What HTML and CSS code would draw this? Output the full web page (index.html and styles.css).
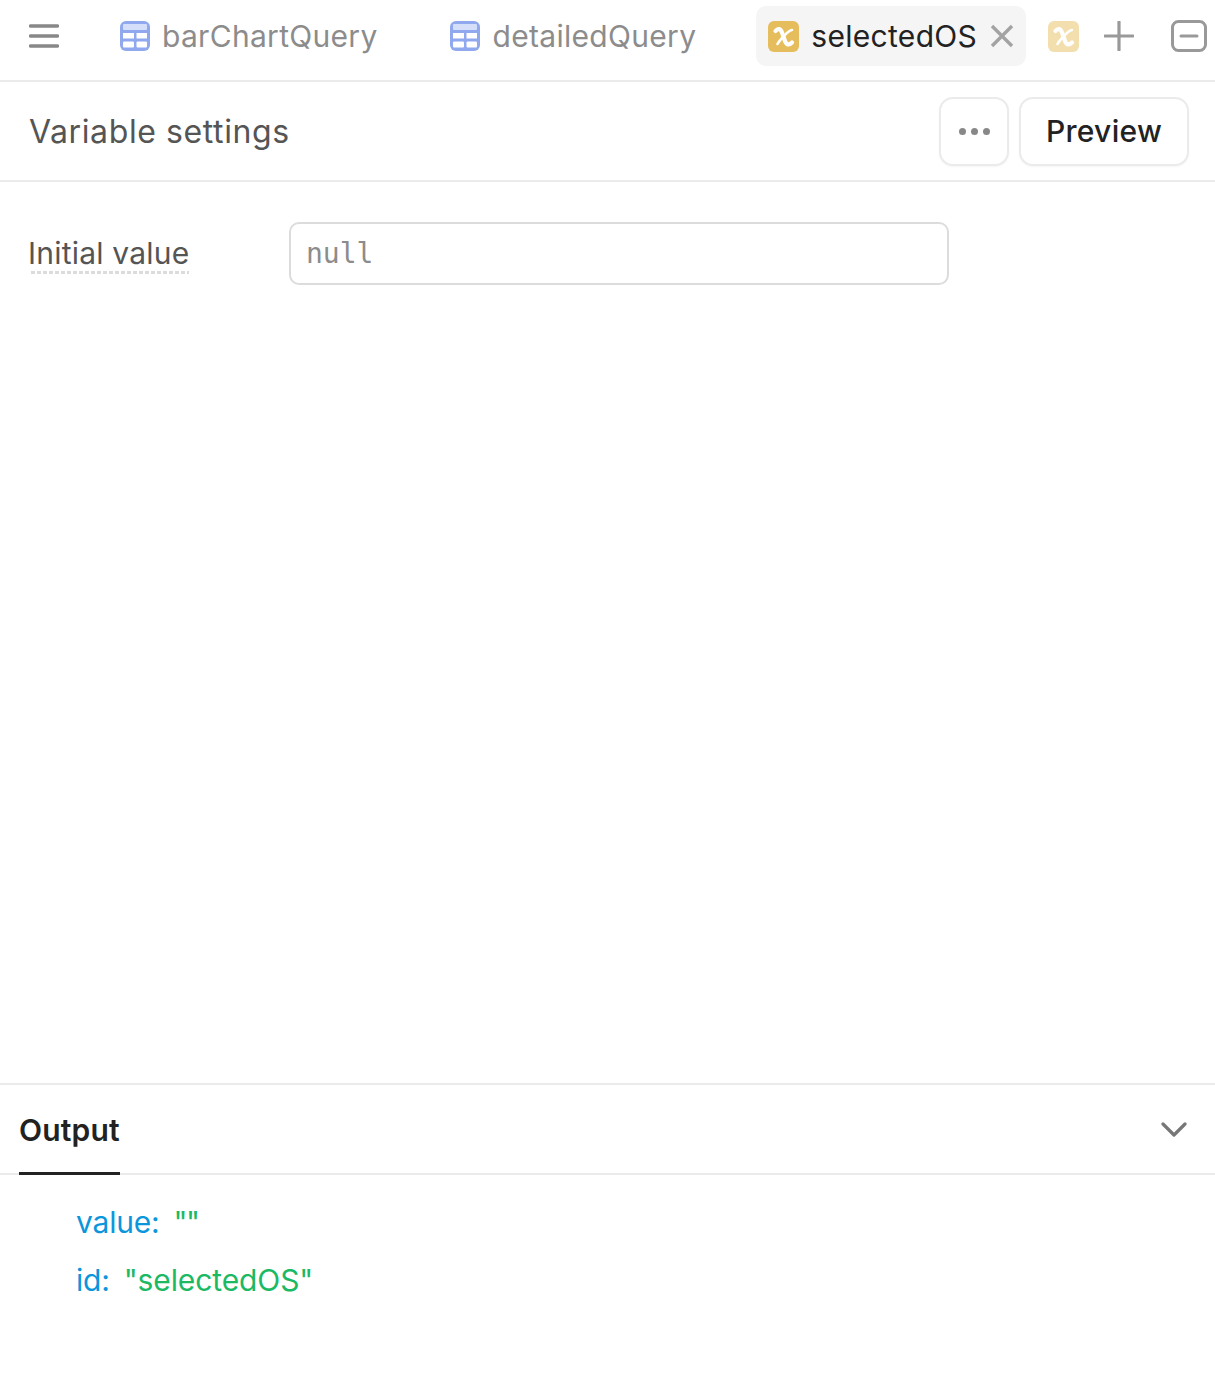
FILE: index.html
```html
<!DOCTYPE html>
<html lang="en">
<head>
    <meta charset="UTF-8">
    <title>Variable settings</title>
    <link rel="stylesheet" href="styles.css">
</head>
<body>
    <div class="tabs">
        <button class="icon-btn menu-btn">
            <svg width="30" height="24" viewBox="0 0 30 24"><path d="M1.5 2h27M1.5 12h27M1.5 22h27" stroke="#888" stroke-width="3.4" stroke-linecap="round" fill="none"/></svg>
        </button>
        <div class="tab tab-first">
            <svg class="tab-icon" width="30" height="30" viewBox="0 0 30 30">
                <rect width="30" height="30" rx="6" fill="#8fa8ee"/>
                <rect x="3" y="3" width="24" height="6" rx="1" fill="#d5dffa"/>
                <rect x="3" y="12" width="11" height="5.5" fill="#fff"/>
                <rect x="16.500" y="12" width="10.500" height="5.500" fill="#fff"/>
                <rect x="3" y="20.500" width="11" height="6" rx="1" fill="#fff"/>
                <rect x="16.500" y="20.500" width="10.500" height="6" rx="1" fill="#fff"/>
            </svg>
            <span>barChartQuery</span>
        </div>
        <div class="tab tab-second">
            <svg class="tab-icon" width="30" height="30" viewBox="0 0 30 30">
                <rect width="30" height="30" rx="6" fill="#8fa8ee"/>
                <rect x="3" y="3" width="24" height="6" rx="1" fill="#d5dffa"/>
                <rect x="3" y="12" width="11" height="5.5" fill="#fff"/>
                <rect x="16.500" y="12" width="10.500" height="5.500" fill="#fff"/>
                <rect x="3" y="20.500" width="11" height="6" rx="1" fill="#fff"/>
                <rect x="16.500" y="20.500" width="10.500" height="6" rx="1" fill="#fff"/>
            </svg>
            <span>detailedQuery</span>
        </div>
        <div class="tab tab-active">
            <svg class="var-icon" width="31" height="31" viewBox="0 0 31 31">
                <rect width="31" height="31" rx="6" fill="#e5bd5c"/>
                <path d="M7.500 10C10 7 12.500 7.500 14 11.500L17 20C18.500 24 21 24.500 24 21.500" stroke="#fff" stroke-width="4.200" stroke-linecap="round" fill="none"/>
                <path d="M24 9C20 9.500 11 20 9.500 23" stroke="#fff" stroke-width="2.600" stroke-linecap="round" fill="none"/>
            </svg>
            <span class="tab-name">selectedOS</span>
            <svg class="close-icon" width="24" height="24" viewBox="0 0 24 24"><path d="M2 2l20 20M22 2L2 22" stroke="#a3a3a3" stroke-width="3.4" fill="none"/></svg>
        </div>
        <svg class="var-icon var-faded" width="31" height="31" viewBox="0 0 31 31">
            <rect width="31" height="31" rx="6" fill="#f3dfae"/>
            <path d="M7.500 10C10 7 12.500 7.500 14 11.500L17 20C18.500 24 21 24.500 24 21.500" stroke="#fff" stroke-width="4.200" stroke-linecap="round" fill="none"/>
            <path d="M24 9C20 9.500 11 20 9.500 23" stroke="#fff" stroke-width="2.600" stroke-linecap="round" fill="none"/>
        </svg>
        <button class="icon-btn plus-btn">
            <svg width="30" height="30" viewBox="0 0 30 30"><path d="M15 1v28M1 15h28" stroke="#999" stroke-width="3.2" stroke-linecap="round" fill="none"/></svg>
        </button>
        <button class="icon-btn collapse-btn">
            <svg width="36" height="32" viewBox="0 0 36 32"><rect x="1.500" y="1.500" width="33" height="29" rx="6" stroke="#999" stroke-width="3" fill="none"/><path d="M10 16h16" stroke="#999" stroke-width="3" stroke-linecap="round"/></svg>
        </button>
    </div>

    <div class="title-bar">
        <h2>Variable settings</h2>
        <div class="title-actions">
            <button class="btn btn-more"><i></i><i></i><i></i></button>
            <button class="btn btn-preview">Preview</button>
        </div>
    </div>

    <div class="settings">
        <label class="field-label">Initial value</label>
        <div class="field-input">null</div>
    </div>

    <div class="output">
        <div class="output-head">
            <span class="output-tab">Output</span>
            <svg width="26" height="16" viewBox="0 0 26 16"><path d="M2 2l11 11L24 2" stroke="#777" stroke-width="3.2" stroke-linecap="round" stroke-linejoin="round" fill="none"/></svg>
        </div>
        <div class="output-body">
            <div class="row"><span class="key">value:</span><span class="val val-empty">""</span></div>
            <div class="row"><span class="key">id:</span><span class="val">"selectedOS"</span></div>
        </div>
    </div>
</body>
</html>
```

FILE: styles.css
```css
* {
    box-sizing: border-box;
}
body {
    margin: 0;
    height: 1394px;
    display: flex;
    flex-direction: column;
    font-family: Inter, "Liberation Sans", sans-serif;
    color: #222;
    background-color: #fff;
    overflow: hidden;
}
button {
    font-family: inherit;
    background: none;
    border: none;
    padding: 0;
}
.icon-btn {
    display: flex;
    flex-shrink: 0;
}

/* tabs */
.tabs {
    height: 82px;
    flex-shrink: 0;
    display: flex;
    align-items: center;
    padding: 0 0 8px 29px;
    border-bottom: 2px solid #ebebeb;
    font-size: 30px;
    letter-spacing: 0.3px;
    white-space: nowrap;
}
.menu-btn {
    margin-right: 61px;
}
.tab {
    display: flex;
    align-items: center;
    color: #8c8c8c;
}
.tab-icon {
    margin-right: 12px;
    flex-shrink: 0;
}
.tab-first {
    margin-right: 72px;
}
.tab-second {
    margin-right: 60px;
}
.tab-second .tab-icon {
    margin-right: 13px;
}
.tab-active {
    height: 60px;
    width: 270px;
    padding: 0 12px;
    background-color: #f5f5f5;
    border-radius: 10px;
    color: #222;
}
.tab-name {
    margin-left: 12px;
    margin-right: 13px;
}
.close-icon {
    flex-shrink: 0;
}
.var-icon {
    flex-shrink: 0;
}
.var-faded {
    margin-left: 22px;
    margin-right: 25px;
}
.plus-btn {
    margin-right: 37px;
}

/* title */
.title-bar {
    height: 100px;
    flex-shrink: 0;
    display: flex;
    align-items: center;
    justify-content: space-between;
    padding: 0 26px 0 29px;
    border-bottom: 2px solid #ebebeb;
}
.title-bar h2 {
    margin: 0;
    font-size: 32px;
    font-weight: 400;
    letter-spacing: 0.6px;
    color: #555;
}
.title-actions {
    display: flex;
    gap: 10px;
    margin-top: 1px;
}
.btn {
    height: 69px;
    border: 2px solid #ebebeb;
    border-radius: 14px;
    background-color: #fff;
    box-shadow: 0 1px 2px rgba(0,0,0,0.04);
}
.btn-more {
    width: 70px;
    display: flex;
    align-items: center;
    justify-content: center;
    gap: 5px;
}
.btn-more i {
    width: 7px;
    height: 7px;
    border-radius: 50%;
    background-color: #888;
}
.btn-preview {
    width: 170px;
    padding-bottom: 2px;
    font-size: 30px;
    font-weight: 500;
    letter-spacing: 0.3px;
    color: #222;
}

/* settings form */
.settings {
    flex: 1;
    display: flex;
    align-items: flex-start;
    padding: 40px 0 0 28px;
}
.field-label {
    width: 261px;
    margin-top: 13px;
    flex-shrink: 0;
    font-size: 30px;
    letter-spacing: 0.2px;
    color: #555;
    position: relative;
}
/* dashed line sits under the text, not the whole column */
.field-label::after {
    content: "";
    position: absolute;
    left: 3px;
    top: 36px;
    width: 158px;
    height: 3px;
    background: repeating-linear-gradient(90deg, #dcdcdc 0 4px, transparent 4px 6px);
}
.field-input {
    width: 660px;
    height: 63px;
    padding: 0 15px;
    display: flex;
    align-items: center;
    border: 2px solid #dcdcdc;
    border-radius: 10px;
    font-family: "DejaVu Sans Mono", monospace;
    font-size: 28px;
    color: #8c8c8c;
}

/* output */
.output {
    height: 311px;
    flex-shrink: 0;
    border-top: 2px solid #ebebeb;
}
.output-head {
    height: 90px;
    display: flex;
    align-items: stretch;
    justify-content: space-between;
    padding: 0 28px 0 19px;
    border-bottom: 2px solid #ebebeb;
}
.output-head svg {
    align-self: center;
    margin-top: 2px;
}
.output-tab {
    display: flex;
    align-items: center;
    padding-top: 2px;
    font-size: 30px;
    font-weight: 600;
    letter-spacing: 0.2px;
    color: #222;
    border-bottom: 3px solid #222;
    margin-bottom: -2px;
}
.output-body {
    padding: 18px 0 0 76px;
    font-size: 30px;
}
.row {
    display: flex;
    gap: 14px;
    height: 58px;
    align-items: center;
}
.key {
    color: #0b96dc;
    letter-spacing: -0.2px;
}
.val {
    color: #1cb964;
    letter-spacing: -0.1px;
}
.val-empty {
    letter-spacing: -1.5px;
}
```
